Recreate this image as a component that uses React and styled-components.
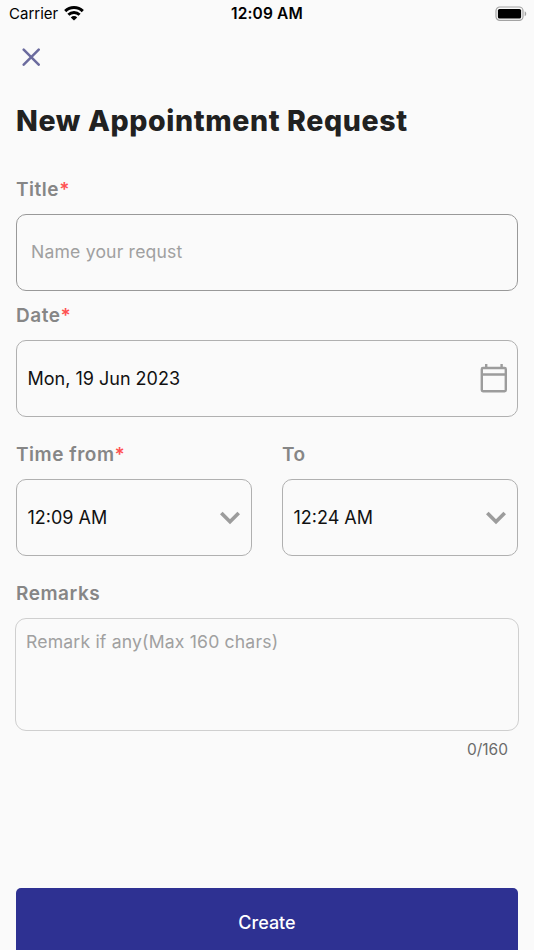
import styled, { createGlobalStyle } from "styled-components";

const App = () => {
  return (
    <>
      <GlobalStyle />
      <Screen>
        <StatusBar>
          <Network>
            <Carrier>Carrier</Carrier>
            <WifiIcon />
          </Network>
          <Clock>12:09 AM</Clock>
          <BatteryIcon />
        </StatusBar>
        <Toolbar>
          <CloseButton aria-label="Close">
            <CloseIcon />
          </CloseButton>
        </Toolbar>
        <Form>
          <Heading>New Appointment Request</Heading>

          <Label>
            Title<Required>*</Required>
          </Label>
          <TitleInput placeholder="Name your requst" />

          <Label $top={11}>
            Date<Required>*</Required>
          </Label>
          <Picker $iconGap={9}>
            <Value>Mon, 19 Jun 2023</Value>
            <CalendarIcon />
          </Picker>

          <TimeRow>
            <div>
              <Label>
                Time from<Required>*</Required>
              </Label>
              <Picker $iconGap={11}>
                <Value>12:09 AM</Value>
                <ChevronIcon />
              </Picker>
            </div>
            <div>
              <Label>To</Label>
              <Picker $iconGap={11}>
                <Value>12:24 AM</Value>
                <ChevronIcon />
              </Picker>
            </div>
          </TimeRow>

          <Label>Remarks</Label>
          <Remarks placeholder="Remark if any(Max 160 chars)" />
          <Counter>0/160</Counter>
        </Form>
        <CreateButton>Create</CreateButton>
      </Screen>
    </>
  );
};

export default App;

const WifiIcon = () => (
  <svg width="20" height="15" viewBox="0 0 20 15">
    <g fill="none" stroke="#000" strokeWidth="3">
      <path d="M1.2 5.1a12.6 12.6 0 0 1 17.6 0" />
      <path d="M4.4 8.8a8 8 0 0 1 11.2 0" />
    </g>
    <path d="M10 14.6 6.8 11.4a4.6 4.6 0 0 1 6.4 0z" />
  </svg>
);

const BatteryIcon = () => (
  <svg width="32" height="16" viewBox="0 0 32 16">
    <rect
      x="1"
      y="1"
      width="27"
      height="13.4"
      rx="3.8"
      fill="none"
      stroke="#a3a3a3"
      strokeWidth="1.2"
    />
    <rect x="2.9" y="2.9" width="23.2" height="9.7" rx="1.6" />
    <path d="M29.7 5.2c2 .9 2 4.1 0 5z" fill="#a3a3a3" />
  </svg>
);

const CloseIcon = () => (
  <svg width="18" height="18" viewBox="0 0 18 18">
    <path
      d="M1.7 1.7l15 15M16.7 1.7l-15 15"
      stroke="#6b6b9e"
      strokeWidth="2.5"
      strokeLinecap="round"
    />
  </svg>
);

const CalendarIcon = () => (
  <svg width="28" height="30" viewBox="0 0 28 30">
    <rect
      x="1.8"
      y="4"
      width="24"
      height="23.3"
      rx="1.2"
      fill="none"
      stroke="#9c9c9c"
      strokeWidth="2.4"
    />
    <path
      d="M1.8 10.5h24M6.2 .1v4M21.6 .1v4"
      stroke="#9c9c9c"
      strokeWidth="2.4"
    />
  </svg>
);

const ChevronIcon = () => (
  <svg width="20" height="14" viewBox="0 0 20 14">
    <path
      d="M1.3 2 10 10.7l8.7-8.7"
      fill="none"
      stroke="#9c9c9c"
      strokeWidth="3.7"
    />
  </svg>
);

const GlobalStyle = createGlobalStyle`
  * {
    box-sizing: border-box;
  }

  body {
    margin: 0;
    background: #fafafa;
    font-family: Inter, "Liberation Sans", sans-serif;
  }

  button, input, textarea {
    font-family: inherit;
  }
`;

const Screen = styled.main`
  display: flex;
  flex-direction: column;
  height: 950px;
  overflow: hidden;
`;

const StatusBar = styled.header`
  display: grid;
  grid-template-columns: 1fr auto 1fr;
  align-items: center;
  height: 27px;
  padding: 0 7px 0 9px;
  color: #000;

  & > :last-child {
    justify-self: end;
  }
`;

const Network = styled.div`
  display: flex;
  align-items: center;
  gap: 6px;
`;

const Carrier = styled.span`
  font-size: 15px;
  line-height: 20px;
`;

const Clock = styled.span`
  margin-right: 2px;
  font-size: 15.5px;
  font-weight: 600;
  line-height: 20px;
  letter-spacing: 0.15px;
`;

const Toolbar = styled.div`
  display: flex;
  align-items: center;
  height: 60px;
  padding-left: 22px;
`;

const CloseButton = styled.button`
  display: flex;
  padding: 0;
  border: 0;
  background: none;
`;

const Form = styled.form`
  flex: 1;
  padding: 0 16px;
`;

const Heading = styled.h1`
  margin: 17px 0 38px;
  color: #212121;
  font-size: 28.5px;
  font-weight: 800;
  line-height: 34px;
  letter-spacing: 0.62px;
`;

const Label = styled.div`
  margin-top: ${(props) => props.$top || 0}px;
  margin-bottom: 11px;
  color: #868686;
  font-size: 19px;
  font-weight: 600;
  line-height: 27px;
  letter-spacing: 0.53px;
`;

const Required = styled.span`
  color: #ff5252;
`;

const TitleInput = styled.input`
  display: block;
  width: 100%;
  height: 77px;
  padding: 0 14px 2px;
  border: 1px solid #999;
  border-radius: 10px;
  background: transparent;
  font-size: 17.6px;
  letter-spacing: 0.18px;

  &::placeholder {
    color: #a0a0a0;
  }
`;

const Picker = styled.div`
  display: flex;
  align-items: center;
  justify-content: space-between;
  height: 77px;
  padding: 0 ${(props) => props.$iconGap}px 0 10.5px;
  border: 1px solid #b0b0b0;
  border-radius: 10px;
`;

const Value = styled.span`
  color: #111;
  font-size: 18px;
  line-height: 24px;
`;

const TimeRow = styled.div`
  display: grid;
  grid-template-columns: 1fr 1fr;
  gap: 30px;
  margin: 24px 0;
`;

const Remarks = styled.textarea`
  display: block;
  width: calc(100% + 2px);
  height: 113px;
  margin: 0 -1px;
  padding: 11px 10px;
  border: 1px solid #cfcfcf;
  border-radius: 11px;
  background: transparent;
  font-size: 17.6px;
  line-height: 24px;
  letter-spacing: 0.18px;
  resize: none;

  &::placeholder {
    color: #a0a0a0;
  }
`;

const Counter = styled.div`
  margin: 8px 10px 0 0;
  color: #6b6b6b;
  font-size: 15.5px;
  line-height: 22px;
  text-align: right;
`;

const CreateButton = styled.button`
  flex: none;
  height: 70px;
  margin: 0 16px -8px;
  padding: 0 0 2px;
  border: 0;
  border-radius: 5px;
  background: #2e3192;
  color: #fff;
  font-size: 18px;
  font-weight: 500;
`;
